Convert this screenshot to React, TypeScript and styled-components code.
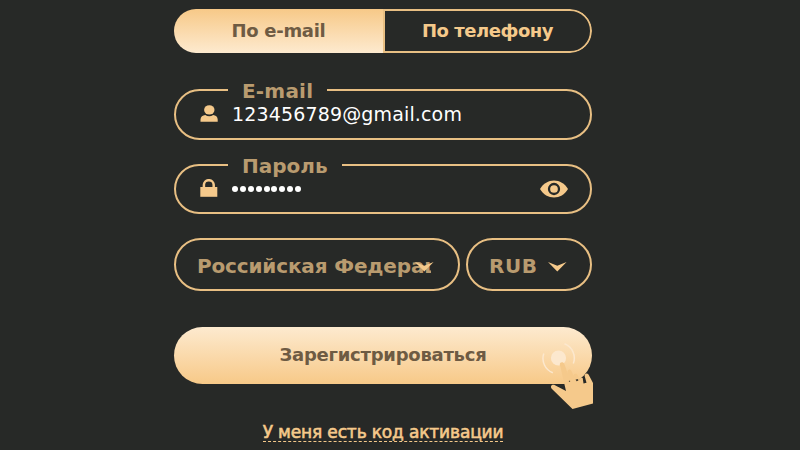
import React from 'react'

import styled, { createGlobalStyle } from 'styled-components'

export default function App() {
  return (
    <>
      <GlobalStyle />
      <Form>
        <Tabs>
          <Tab $active>
            <Caption $spacing={-0.3}>По e-mail</Caption>
          </Tab>
          <Tab>
            <Caption $spacing={-0.45}>По телефону</Caption>
          </Tab>
        </Tabs>
        <Field $height={51}>
          <Label $spacing={0.2}>E-mail</Label>
          <UserIcon />
          <Value>123456789@gmail.com</Value>
        </Field>
        <Field $height={50} $top={24}>
          <Label $spacing={0}>Пароль</Label>
          <LockIcon />
          <Dots>
            {Array.from({ length: 9 }, (_, i) => (
              <Dot key={i} />
            ))}
          </Dots>
          <EyeIcon />
        </Field>
        <Selects>
          <Select $width={286}>
            <SelectText $width={234} $spacing={-0.15}>
              Российская Федерация
            </SelectText>
            <Chevron $left={239} />
          </Select>
          <Select $width={126}>
            <SelectText $width={60} $spacing={0.5}>
              RUB
            </SelectText>
            <Chevron $left={80} />
          </Select>
        </Selects>
        <Submit>
          <Caption $spacing={-0.25}>Зарегистрироваться</Caption>
          <Pointer />
        </Submit>
        <CodeLink>У меня есть код активации</CodeLink>
      </Form>
    </>
  )
}

const UserIcon = () => (
  <FieldIcon width="18" height="18" viewBox="0 0 18 18">
    <ellipse cx="9.3" cy="4.9" rx="5.2" ry="4.7" />
    <path d="M0.5 16.8v-2.2c0-3 2.2-4.4 4.8-4.6 2.2 1.6 5.6 1.6 7.8 0 2.6.2 4.6 1.6 4.6 4.6v2.2z" />
  </FieldIcon>
)

const LockIcon = () => (
  <FieldIcon width="18" height="18" viewBox="0 0 18 18">
    <path d="M0.3 8h17v9.8h-17z" />
    <path d="M3.9 9V5.8a4.9 4.6 0 0 1 9.800 0V9" fill="none" stroke="#f5c98b" strokeWidth="2.5" />
  </FieldIcon>
)

const EyeIcon = () => (
  <Eye width="28" height="18" viewBox="0 0 28 18">
    <path d="M0 9C3.4 3.2 8.4.4 14 .4S24.6 3.2 28 9c-3.4 5.7-8.4 8.5-14 8.5S3.4 14.7 0 9z" fill="#f5c98b" />
    <circle cx="14" cy="9" r="5" fill="#f5c98b" stroke="#272927" strokeWidth="2.3" />
  </Eye>
)

const Chevron = ({ $left }: { $left: number }) => (
  <Arrow $left={$left} width="19" height="10" viewBox="0 0 19 10">
    <path d="M0 0 9.3 3.8 18.6 0 9.3 9.4z" fill="#f5c98b" />
  </Arrow>
)

const Pointer = () => (
  <Hand width="54" height="73" viewBox="0 0 54 73">
    <circle cx="19.5" cy="21" r="7.6" fill="#fce8ce" />
    <path
      d="M4.8 16.6A15.3 15.3 0 0 0 13.8 35.8M25.5 6.8A15.3 15.3 0 0 1 34.3 26.5"
      fill="none"
      stroke="#fce8ce"
      strokeWidth="1.5"
    />
    <path
      d="M20.8 27.5c0-2.8 3.7-3 4.500-.4l3.900 10.600-.7-2.700c-.4-2.700 3.200-3.400 4.100-.8l1.800 4.600c.3-2.400 3.500-2.900 4.400-.3l1.600 4c.2-1.700 2-2.400 3.300-1.400l.8 5.400 3-.7-1.800-6.500c-.7-3 2.800-4 4.100-1.300L54 46v20.500L33.500 72 13 52c-2.600-2.800.3-5.400 3-3.800L27 54z"
      fill="#f5c98b"
    />
    <path d="M36.6 42.6l2.500-.7.2 1.900-1.900.4zM29.9 43.800h1.200v1h-1.200z" fill="#4c4333" />
  </Hand>
)

const GlobalStyle = createGlobalStyle`
  * {
    box-sizing: border-box;
  }
  body {
    margin: 0;
    height: 450px;
    overflow: hidden;
    background: #272927;
    font-family: 'DejaVu Sans', Verdana, sans-serif;
  }
`
const Form = styled.form`
  display: flex;
  flex-direction: column;
  width: 418px;
  margin: 9px auto 0 174px;
`
const Tabs = styled.div`
  display: flex;
  height: 44px;
  margin-bottom: 36px;
  border-radius: 22px;
  overflow: hidden;
`
const Tab = styled.div<{ $active?: boolean }>`
  display: flex;
  align-items: center;
  justify-content: center;
  width: 209px;
  border: ${({ $active }) => ($active ? 'none' : '2px solid #e8bf83')};
  border-radius: ${({ $active }) => ($active ? '0' : '0 22px 22px 0')};
  background: ${({ $active }) => ($active ? 'linear-gradient(#f7c988, #fdeacf)' : 'none')};
  color: ${({ $active }) => ($active ? '#6e5b43' : '#f5c98b')};
`
const Caption = styled.span<{ $spacing: number }>`
  font-size: 18px;
  font-weight: 700;
  line-height: 22px;
  letter-spacing: ${({ $spacing }) => $spacing}px;
  white-space: nowrap;
`
const Field = styled.div<{ $height: number; $top?: number }>`
  position: relative;
  display: flex;
  align-items: center;
  height: ${({ $height }) => $height}px;
  margin-top: ${({ $top }) => $top || 0}px;
  padding: 0 22.5px 0 23.5px;
  border: 2px solid #e8bf83;
  border-radius: 26px;
`
const Label = styled.label<{ $spacing: number }>`
  position: absolute;
  top: -10px;
  left: 52px;
  padding: 0 14px;
  background: #272927;
  color: #b99b6f;
  font-size: 20px;
  font-weight: 700;
  line-height: 20px;
  letter-spacing: ${({ $spacing }) => $spacing}px;
`
const FieldIcon = styled.svg`
  flex: none;
  margin: 0 14.5px 2px 0;
  fill: #f5c98b;
`
const Value = styled.span`
  margin-bottom: 2px;
  color: #fff;
  font-size: 19px;
  line-height: 24px;
  letter-spacing: 0.15px;
`
const Dots = styled.div`
  display: flex;
  gap: 1.9px;
`
const Dot = styled.i`
  width: 6px;
  height: 6px;
  border-radius: 50%;
  background: #fff;
`
const Eye = styled.svg`
  margin-left: auto;
`
const Selects = styled.div`
  display: flex;
  justify-content: space-between;
  margin-top: 24px;
`
const Select = styled.div<{ $width: number }>`
  position: relative;
  display: flex;
  align-items: center;
  width: ${({ $width }) => $width}px;
  height: 53px;
  padding: 2px 0 0 21px;
  border: 2px solid #e8bf83;
  border-radius: 27px;
`
const SelectText = styled.span<{ $width: number; $spacing: number }>`
  width: ${({ $width }) => $width}px;
  overflow: hidden;
  color: #b99b6f;
  font-size: 20px;
  font-weight: 700;
  line-height: 26px;
  letter-spacing: ${({ $spacing }) => $spacing}px;
  white-space: nowrap;
`
const Arrow = styled.svg<{ $left: number }>`
  position: absolute;
  top: 22px;
  left: ${({ $left }) => $left}px;
`
const Submit = styled.button`
  position: relative;
  height: 57px;
  margin-top: 36px;
  padding: 0 0 2px;
  border: none;
  border-radius: 29px;
  background: linear-gradient(#fdeacf, #f7c988);
  color: #6e5b43;
  font-family: inherit;
`
const Hand = styled.svg`
  position: absolute;
  top: 10px;
  left: 365px;
`
const CodeLink = styled.a`
  align-self: center;
  margin-top: 40px;
  border-bottom: 1px dashed #f5c98b;
  color: #f5c98b;
  font-size: 17px;
  line-height: 17px;
  letter-spacing: -0.15px;
  -webkit-text-stroke: 0.6px #f5c98b;
`
